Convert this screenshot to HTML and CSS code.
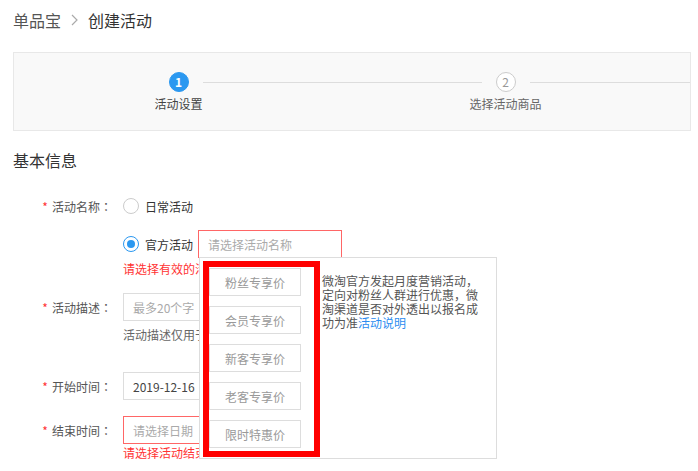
FILE: index.html
```html
<!DOCTYPE html>
<html lang="zh-CN">
<head>
  <meta charset="UTF-8" />
  <title>创建活动</title>
  <link rel="stylesheet" href="styles.css">
</head>
<body>
<div class="page">

  <div class="crumb">
    <span class="crumb-home">单品宝</span>
    <svg class="chev" width="7" height="12" viewBox="0 0 7 12"><path d="M1 1l5 5-5 5" fill="none" stroke="#aaa" stroke-width="1.2"/></svg>
    <span>创建活动</span>
  </div>

  <div class="steps">
    <div class="step">
      <div class="num on">1</div>
      <div class="step-label active">活动设置</div>
    </div>
    <div class="step">
      <div class="num">2</div>
      <div class="step-label">选择活动商品</div>
    </div>
  </div>

  <div class="title">基本信息</div>

  <div class="form">
    <div class="row row-first">
      <div class="label"><span class="star">*</span>活动名称<span class="punct">：</span></div>
      <label class="radio"><i></i>日常活动</label>
    </div>

    <div class="row indent row-gap">
      <label class="radio checked"><i></i>官方活动</label>
      <div class="field">
        <input class="input err short" placeholder="请选择活动名称" />
        <!-- dropdown -->
        <div class="panel">
          <ul class="options">
            <li>粉丝专享价</li>
            <li>会员专享价</li>
            <li>新客专享价</li>
            <li>老客专享价</li>
            <li>限时特惠价</li>
          </ul>
          <p class="panel-tip">微淘官方发起月度营销活动，定向对粉丝人群进行优惠，微淘渠道是否对外透出以报名成功为准<a href="#">活动说明</a></p>
        </div>
      </div>
    </div>
    <div class="msg">请选择有效的活动</div>

    <div class="row row-desc">
      <div class="label"><span class="star">*</span>活动描述<span class="punct">：</span></div>
      <input class="input" placeholder="最多20个字" />
    </div>
    <div class="help">活动描述仅用于</div>

    <div class="row row-start">
      <div class="label"><span class="star">*</span>开始时间<span class="punct">：</span></div>
      <input class="input" value="2019-12-16" />
    </div>

    <div class="row row-end">
      <div class="label"><span class="star">*</span>结束时间<span class="punct">：</span></div>
      <input class="input err" placeholder="请选择日期" />
    </div>
    <div class="msg msg-end">请选择活动结束时间</div>
  </div>

</div>
</body>
</html>
```

FILE: styles.css
```css
body {
  margin: 0;
  font-family: "Noto Sans CJK SC", "Noto Sans", sans-serif;
  font-size: 12px;
  color: #333;
  background: #fff;
}

.page {
  padding-left: 13px;
  width: 678px;
}

/* centred full-width punctuation, as in the original font */
.punct {
  font-family: "Noto Sans CJK TC", "Noto Sans CJK SC", sans-serif;
}

/* breadcrumb */
.crumb {
  height: 40px;
  display: flex;
  align-items: center;
  gap: 10px;
  font-size: 16px;
  color: #333;
}

.crumb-home {
  color: #555;
}

/* steps */
.steps {
  margin-top: 12px;
  height: 79px;
  box-sizing: border-box;
  border: 1px solid #e8e8e8;
  background: #f9f9f9;
  overflow: hidden;
  display: flex;
  padding-left: 1px;
}

.step {
  flex: 0 0 327px;
  position: relative;
  display: flex;
  flex-direction: column;
  align-items: center;
  padding-top: 19px;
}

.step::after {
  content: "";
  position: absolute;
  top: 29px;
  left: calc(50% + 24px);
  width: calc(100% - 48px);
  height: 1px;
  background: #ddd;
}

.num {
  width: 20px;
  height: 20px;
  box-sizing: border-box;
  border-radius: 50%;
  border: 1px solid #ccc;
  background: #fff;
  color: #999;
  display: flex;
  align-items: center;
  justify-content: center;
  font-size: 12px;
  line-height: 1;
}

.num.on {
  border-color: #2b98f0;
  background: #2b98f0;
  color: #fff;
  font-weight: bold;
}

.step-label {
  margin-top: 4px;
  line-height: 16px;
  color: #666;
}

.step-label.active {
  color: #444;
}

.title {
  margin-top: 18px;
  font-size: 16px;
  line-height: 22px;
  color: #333;
}

/* form */
.row {
  display: flex;
  align-items: center;
  height: 28px;
}

.row.indent {
  padding-left: 110px;
}

.row-first { margin-top: 21px; }
.row-gap { margin-top: 10px; }
.row-desc { margin-top: 16px; }
.row-start { margin-top: 29px; }
.row-end { margin-top: 16px; }

.label {
  width: 110px;
  padding-right: 11px;
  box-sizing: border-box;
  display: flex;
  justify-content: flex-end;
  color: #555;
}

.star {
  color: #f33;
  margin-right: 4px;
}

.radio {
  display: flex;
  align-items: center;
  gap: 6px;
  color: #333;
}

.radio i {
  width: 16px;
  height: 16px;
  box-sizing: border-box;
  border: 1px solid #ccc;
  border-radius: 50%;
  background: #fff;
  display: flex;
  align-items: center;
  justify-content: center;
}

.radio.checked i {
  border-color: #2b98f0;
}

.radio.checked i::after {
  content: "";
  width: 8px;
  height: 8px;
  border-radius: 50%;
  background: #2b98f0;
}

.field {
  position: relative;
  margin-left: 5px;
}

.input {
  width: 220px;
  height: 28px;
  box-sizing: border-box;
  border: 1px solid #ddd;
  padding: 0 9px;
  font-family: inherit;
  font-size: 12px;
  color: #444;
  background: #fff;
  outline: none;
  margin: 0;
}

.input::placeholder {
  color: #aaa;
}

.input.short {
  width: 144px;
}

.input.err {
  border-color: #f66;
}

.msg {
  width: fit-content;
  margin: 3px 0 0 110px;
  line-height: 16px;
  color: #f33;
}

.msg-end {
  margin-top: 1px;
  line-height: 15px;
}

.help {
  width: fit-content;
  margin: 6px 0 0 110px;
  line-height: 16px;
  color: #666;
}

/* dropdown panel */
.panel {
  position: absolute;
  top: 27px;
  left: 1px;
  z-index: 10;
  width: 298px;
  height: 202px;
  box-sizing: border-box;
  border: 1px solid #ddd;
  background: #fff;
  padding: 3px;
  display: flex;
  align-items: flex-start;
}

.options {
  list-style: none;
  margin: 0;
  width: 117px;
  box-sizing: border-box;
  border: 6px solid #f00;
  padding: 1px 0 3px;
  display: flex;
  flex-direction: column;
  gap: 10px;
}

.options li {
  width: 92px;
  height: 28px;
  box-sizing: border-box;
  border: 1px solid #ddd;
  color: #999;
  display: flex;
  align-items: center;
  justify-content: center;
}

.panel-tip {
  margin: 13px 0 0 2px;
  width: 160px;
  line-height: 14px;
  color: #555;
}

.panel-tip a {
  color: #2b8cf0;
  text-decoration: none;
}
```
